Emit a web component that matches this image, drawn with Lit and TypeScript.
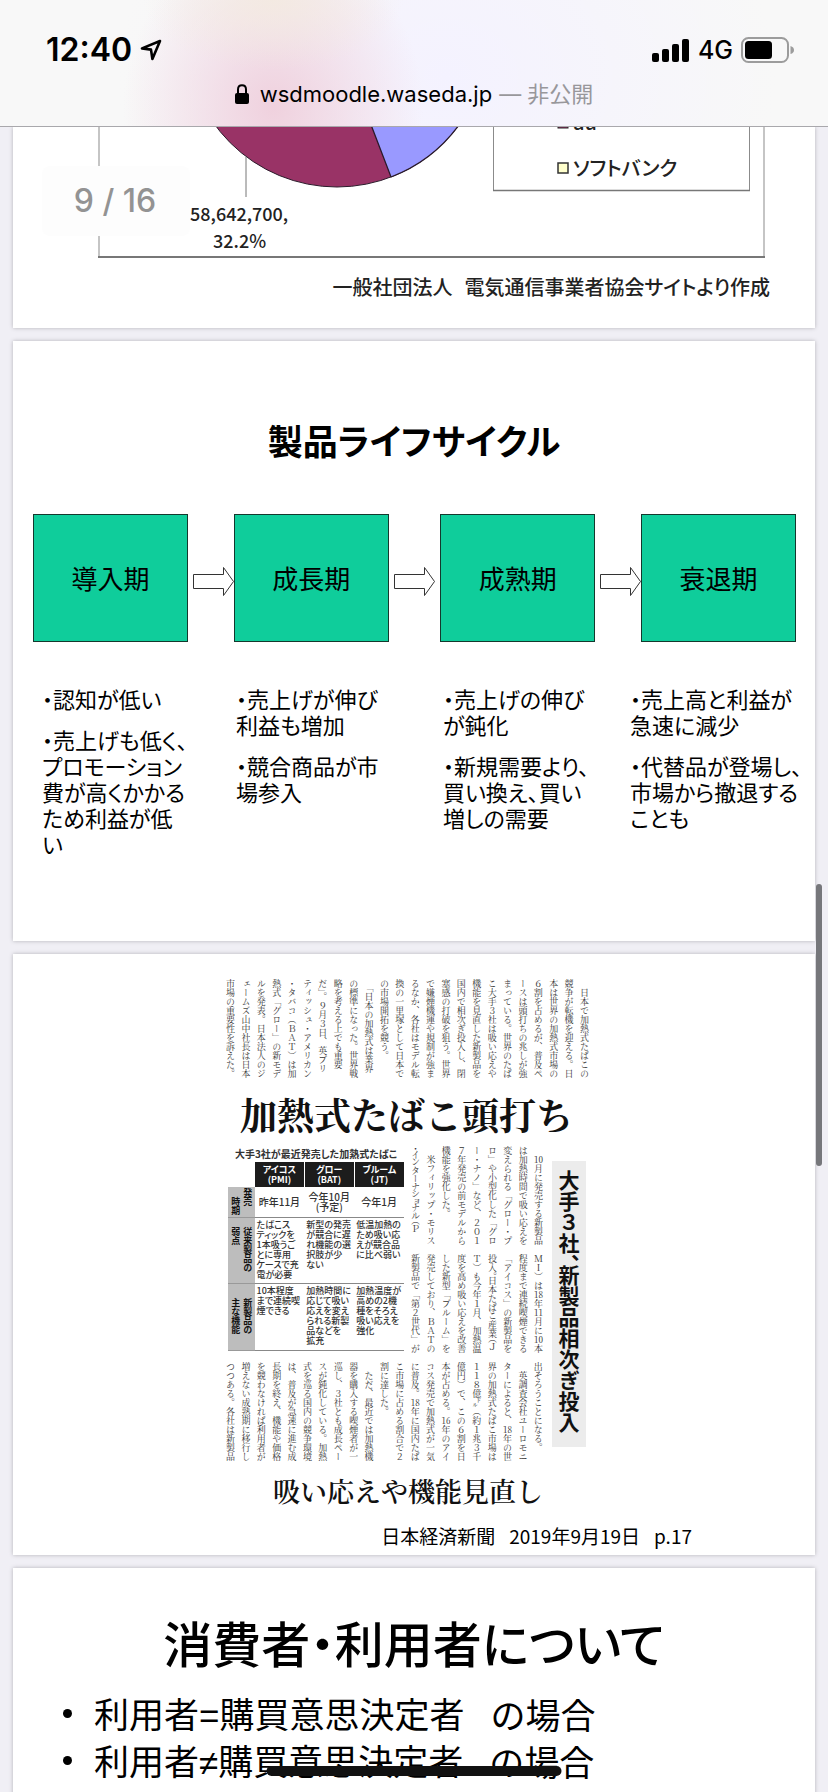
import { LitElement, html, css } from "lit";
import { customElement, property } from "lit/decorators.js";

const sans = css`"Noto Sans CJK JP", "Noto Sans", sans-serif`;
const mincho = css`"Noto Serif CJK JP", "Noto Sans CJK JP", serif`;

interface Stage {
  name: string;
  notes: string[][];
}

const STAGES: Stage[] = [
  {
    name: "導入期",
    notes: [["・認知が低い"], ["・売上げも低く、", "プロモーション", "費が高くかかる", "ため利益が低", "い"]],
  },
  {
    name: "成長期",
    notes: [["・売上げが伸び", "利益も増加"], ["・競合商品が市", "場参入"]],
  },
  {
    name: "成熟期",
    notes: [["・売上げの伸び", "が鈍化"], ["・新規需要より、", "買い換え、買い", "増しの需要"]],
  },
  {
    name: "衰退期",
    notes: [["・売上高と利益が", "急速に減少"], ["・代替品が登場し、", "市場から撤退する", "ことも"]],
  },
];

const TIER_TOP = [
  "　日本で加熱式たばこの", "競争が転機を迎える。日", "本は世界の加熱式市場の", "６割を占めるが、普及ペ",
  "ースは頭打ちの兆しが強", "まっている。世界のたば", "こ大手３社は吸い応えや", "機能を見直した新製品を",
  "国内で相次ぎ投入し、閉", "塞感の打破を狙う。世界", "で嫌煙機運や規制が強ま", "るなか、各社はモデル転",
  "換の一里塚として日本で", "の市場開拓を競う。", "　「日本の加熱式は業界", "の標準になった。世界戦",
  "略を考える上でも重要", "だ」。９月３日、英ブリ", "ティッシュ・アメリカン", "・タバコ（ＢＡＴ）は加",
  "熱式「グロー」の新モデ", "ルを発表。日本法人のジ", "ェームズ山中社長は日本", "市場の重要性を訴えた。",
];

const TIER_UPPER = [
  "　10月に発売する新製品", "は加熱時間で吸い応えを", "変えられる「グロー・プ", "ロ」や小型化した「グロ",
  "ー・ナノ」など、２０１", "７年発売の前モデルから", "機能を強化した。", "　米フィリップ・モリス",
  "・インターナショナル（Ｐ",
];

const TIER_LOWER = [
  "ＭＩ）は18年11月に10本", "程度まで連続喫煙できる", "「アイコス」の新製品を", "投入。日本たばこ産業（Ｊ",
  "Ｔ）も今年１月、加熱温", "度を高め吸い応えを改善", "した新型「ブルーム」を", "発売しており、ＢＡＴの",
  "新製品で「第２世代」が",
];

const TIER_BOTTOM = [
  "出そろうことになる。", "　英調査会社ユーロモニ", "ターによると、18年の世", "界の加熱式たばこ市場は",
  "１１８億㌦（約１兆３千", "億円）で、この６割を日", "本が占める。16年のアイ", "コス発売で加熱式が一気",
  "に普及。18年に国内たば", "こ市場に占める割合で２", "割に達した。", "　ただ、最近では加熱機",
  "器を購入する喫煙者が一", "巡し、３社とも成長ペー", "スが鈍化している。加熱", "式を巡る国内の競争環境",
  "は、普及が急速に進む成", "長期を終え、機能や価格", "を競わなければ利用者が", "増えない成熟期に移行し",
  "つつある。各社は新製品",
];

@customElement("browser-bar")
export class BrowserBar extends LitElement {
  static styles = css`
    :host {
      display: block;
      color: #000;
      font-family: Inter, ${sans};
      border-bottom: 1px solid #a9a8ac;
      background:
        radial-gradient(ellipse 130px 70px at 33% 0, rgba(243, 234, 222, 0.8), transparent),
        radial-gradient(ellipse 150px 170px at 33% 85%, rgba(239, 207, 220, 0.95), transparent),
        radial-gradient(ellipse 330px 260px at 54% 60%, rgba(244, 242, 255, 1), transparent),
        #f8f8f8;
    }
    .status {
      display: flex;
      justify-content: space-between;
      align-items: center;
      height: 40px;
      padding: 30px 34px 4px 46px;
    }
    .group {
      display: flex;
      align-items: center;
      gap: 8px;
    }
    .time {
      font-size: 32px;
      font-weight: 600;
      line-height: 40px;
    }
    .network {
      font-size: 25px;
      font-weight: 500;
      line-height: 40px;
    }
    .address {
      display: flex;
      justify-content: center;
      align-items: center;
      gap: 11px;
      height: 40px;
      padding-bottom: 12px;
      font-size: 22px;
      line-height: 40px;
    }
    .address a {
      color: inherit;
      text-decoration: none;
    }
    .mode {
      color: #98979b;
    }
    .url {
      display: flex;
      gap: 7px;
    }
    svg {
      display: block;
    }
  `;

  render() {
    return html`
      <div class="status">
        <div class="group">
          <span class="time">12:40</span>
          <svg width="22" height="22" viewBox="0 0 22 22" fill="none" stroke="#000" stroke-width="2.6" stroke-linejoin="round">
            <path d="M20 2 L2 9.4 L11 10.6 L12.4 20 Z" />
          </svg>
        </div>
        <div class="group">
          <svg width="38" height="24" viewBox="0 0 38 24">
            <rect x="0" y="15" width="7" height="9" rx="2" />
            <rect x="10" y="11" width="7" height="13" rx="2" />
            <rect x="20" y="6" width="7" height="18" rx="2" />
            <rect x="30" y="1" width="7" height="23" rx="2" />
          </svg>
          <span class="network">4G</span>
          <svg width="53" height="26" viewBox="0 0 53 26">
            <rect x="1" y="1" width="46" height="24" rx="6.5" fill="none" stroke="#9c9c9c" stroke-width="2" />
            <rect x="4" y="4" width="27" height="18" rx="3.5" />
            <path d="M49.5 9 Q53 10 53 13 Q53 16 49.5 17 Z" fill="#9c9c9c" />
          </svg>
        </div>
      </div>
      <div class="address">
        <svg width="14" height="20" viewBox="0 0 14 20">
          <rect x="0" y="9" width="14" height="11" rx="2" />
          <path d="M3 10 V5.5 Q3 1.2 7 1.2 Q11 1.2 11 5.5 V10" fill="none" stroke="#000" stroke-width="2" />
        </svg>
        <span class="url">
          <a href="#">wsdmoodle.waseda.jp</a>
          <span class="mode">— 非公開</span>
        </span>
      </div>
    `;
  }
}

@customElement("share-slide")
export class ShareSlide extends LitElement {
  static styles = css`
    :host {
      display: block;
      font-family: ${sans};
      color: #222;
    }
    svg {
      display: block;
      width: 100%;
    }
    text {
      fill: #222;
      font-weight: 500;
      font-feature-settings: "palt";
    }
    .label {
      font-size: 18px;
    }
    .legend {
      font-size: 20px;
    }
    .credit {
      display: flex;
      justify-content: flex-end;
      gap: 12px;
      margin: 0;
      padding: 14px 45px 27px;
      font-size: 20px;
      font-weight: 500;
      line-height: 28px;
      font-feature-settings: "palt";
    }
  `;

  render() {
    return html`
      <svg viewBox="13 127 802 132">
        <path d="M99 120 V257.5 M764 120 V257.5" stroke="#8b8b8b" />
        <path d="M98 257 H765" stroke="#777" stroke-width="2" />
        <circle cx="337" cy="36" r="151" fill="#993366" stroke="#2a1a2a" />
        <path d="M337 36 L391 177 A151 151 0 0 0 488 36 Z" fill="#9999ff" stroke="#2a1a2a" stroke-width="1.3" />
        <path d="M246 157 V197" stroke="#777" />
        <text class="label" x="190" y="221">58,642,700,</text>
        <text class="label" x="213" y="248">32.2%</text>
        <path d="M493.5 120 V190 M749.5 120 V190" stroke="#8b8b8b" />
        <path d="M493 190.5 H750" stroke="#777" stroke-width="1.5" />
        <rect x="558" y="118" width="10" height="10" fill="#993366" stroke="#222" />
        <text class="legend" x="573" y="130">au</text>
        <rect x="558" y="163" width="10" height="10" fill="#ffffcc" stroke="#333" stroke-width="1.5" />
        <text class="legend" x="573" y="176">ソフトバンク</text>
      </svg>
      <p class="credit"><span>一般社団法人</span><span>電気通信事業者協会サイトより作成</span></p>
    `;
  }
}

@customElement("lifecycle-slide")
export class LifecycleSlide extends LitElement {
  static styles = css`
    :host {
      display: block;
      padding: 75px 0 70px;
      font-family: ${sans};
      color: #000;
    }
    h2 {
      margin: 0;
      text-align: center;
      font-size: 35px;
      font-weight: 700;
      line-height: 48px;
      font-feature-settings: "palt";
    }
    .flow {
      display: grid;
      grid-template-columns: 155fr 45fr 155fr 52fr 155fr 45fr 155fr;
      align-items: center;
      padding: 50px 19px 0 20px;
    }
    .stage {
      display: grid;
      place-items: center;
      box-sizing: border-box;
      height: 128px;
      border: 1px solid #14382d;
      background: #0fcd9b;
      font-size: 26px;
      line-height: 36px;
    }
    .arrow {
      display: block;
      width: 41px;
      height: 44px;
      margin-left: 5px;
      margin-top: 6px;
    }
    .notes {
      display: grid;
      grid-template-columns: 194fr 207fr 187fr 185fr;
      padding: 43px 0 0 29px;
      font-size: 22px;
      line-height: 26px;
      white-space: nowrap;
      font-feature-settings: "palt";
    }
    .notes p {
      margin: 0 0 15px;
    }
    .notes span {
      display: block;
    }
  `;

  render() {
    return html`
      <h2>製品ライフサイクル</h2>
      <div class="flow">
        ${STAGES.map(
          (stage, i) => html`
            ${i > 0
              ? html`<svg class="arrow" viewBox="0 0 41 44" fill="#fff" stroke="#333">
                  <path d="M0.5 15.5 H30.5 V8.5 L40.5 22.5 L30.5 36.5 V29.5 H0.5 Z" />
                </svg>`
              : null}
            <div class="stage">${stage.name}</div>
          `
        )}
      </div>
      <div class="notes">
        ${STAGES.map(
          (stage) => html`<div>
            ${stage.notes.map((note) => html`<p>${note.map((line) => html`<span>${line}</span>`)}</p>`)}
          </div>`
        )}
      </div>
    `;
  }
}

@customElement("news-tier")
export class NewsTier extends LitElement {
  @property({ attribute: false }) lines: string[] = [];

  static styles = css`
    :host {
      display: flex;
      flex-direction: row-reverse;
      justify-content: space-between;
      height: 102px;
      font-family: ${mincho};
      font-size: 9px;
      line-height: 15px;
      color: #333;
    }
    .line {
      width: 15px;
      writing-mode: vertical-rl;
      white-space: nowrap;
    }
    .long {
      font-feature-settings: "vpal";
    }
    .digits {
      text-combine-upright: all;
    }
  `;

  render() {
    return this.lines.map(
      (line) => html`<div class="line ${line.length > 11 && !/\d/.test(line) ? "long" : ""}">${line
        .split(/(\d+)/)
        .map((part) => (/^\d+$/.test(part) ? html`<span class="digits">${part}</span>` : part))}</div>`
    );
  }
}

@customElement("news-slide")
export class NewsSlide extends LitElement {
  static styles = css`
    :host {
      display: block;
      padding: 25px 0 7px;
      font-family: ${sans};
      color: #111;
    }
    .clipping {
      width: 382px;
      margin: 0 auto;
    }
    .top {
      width: 369px;
    }
    h2 {
      margin: 9px 0 8px 17px;
      font-family: ${mincho};
      font-size: 37px;
      font-weight: 700;
      line-height: 48px;
      white-space: nowrap;
    }
    .body {
      display: flex;
      align-items: flex-start;
      gap: 6px;
    }
    .main {
      width: 323px;
    }
    .middle {
      display: flex;
      justify-content: space-between;
      align-items: flex-start;
    }
    .tiers {
      display: flex;
      flex-direction: column;
      gap: 6px;
      width: 138px;
      padding-bottom: 6px;
    }
    .side {
      box-sizing: border-box;
      width: 34px;
      height: 286px;
      margin-top: 15px;
      padding-top: 9px;
      background: #ececec;
      writing-mode: vertical-rl;
      font-size: 21px;
      font-weight: 700;
      line-height: 34px;
      white-space: nowrap;
      font-feature-settings: "vhal";
    }
    table {
      width: 176px;
      margin-left: 5px;
      border-collapse: collapse;
      table-layout: fixed;
      color: #333;
    }
    caption {
      font-size: 10px;
      font-weight: 700;
      line-height: 16px;
      white-space: nowrap;
      font-feature-settings: "palt";
    }
    th,
    td {
      padding: 0;
      font-size: 9px;
      line-height: 10px;
      white-space: nowrap;
      font-feature-settings: "palt";
    }
    .maker {
      height: 25px;
      background: #1c1c1c;
      border-left: 1px solid #fff;
      color: #fff;
      font-weight: 700;
    }
    .axis {
      background: #bdbdbd;
      border-bottom: 1px solid #999;
      text-align: center;
    }
    .axis div {
      display: inline-block;
      writing-mode: vertical-rl;
      font-weight: 700;
      line-height: 12px;
      text-align: left;
      color: #111;
      font-feature-settings: normal;
    }
    td {
      border-bottom: 1px solid #888;
      padding: 2px 0 0 2px;
      vertical-align: top;
      font-weight: 500;
    }
    .corner {
      width: 24px;
      border: 0;
    }
    .date {
      height: 30px;
      padding: 0;
      text-align: center;
      vertical-align: middle;
      font-size: 10px;
    }
    .weak {
      height: 63px;
    }
    .feature {
      height: 64px;
    }
    h3 {
      margin: 9px 0 0 50px;
      font-family: ${mincho};
      font-size: 27px;
      font-weight: 600;
      line-height: 36px;
      white-space: nowrap;
    }
    .source {
      display: flex;
      justify-content: flex-end;
      gap: 14px;
      margin: 0;
      padding: 15px 123px 0 0;
      font-size: 19px;
      line-height: 24px;
      color: #000;
    }
  `;

  render() {
    return html`
      <div class="clipping">
        <news-tier class="top" .lines=${TIER_TOP}></news-tier>
        <h2>加熱式たばこ頭打ち</h2>
        <div class="body">
          <div class="main">
            <div class="middle">
              <table>
                <caption>大手3社が最近発売した加熱式たばこ</caption>
                <tr>
                  <td class="corner"></td>
                  <th class="maker" scope="col">アイコス<br />(PMI)</th>
                  <th class="maker" scope="col">グロー<br />(BAT)</th>
                  <th class="maker" scope="col">ブルーム<br />(JT)</th>
                </tr>
                <tr>
                  <th class="axis" scope="row"><div>発売<br />　時期</div></th>
                  <td class="date">昨年11月</td>
                  <td class="date">今年10月<br />(予定)</td>
                  <td class="date">今年1月</td>
                </tr>
                <tr>
                  <th class="axis" scope="row"><div>従来製品の<br />弱点</div></th>
                  <td class="weak">たばこス<br />ティックを<br />1本吸うご<br />とに専用<br />ケースで充<br />電が必要</td>
                  <td class="weak">新型の発売<br />が競合に遅<br />れ機能の選<br />択肢が少<br />ない</td>
                  <td class="weak">低温加熱の<br />ため吸い応<br />えが競合品<br />に比べ弱い</td>
                </tr>
                <tr>
                  <th class="axis" scope="row"><div>新製品の<br />主な機能</div></th>
                  <td class="feature">10本程度<br />まで連続喫<br />煙できる</td>
                  <td class="feature">加熱時間に<br />応じて吸い<br />応えを変え<br />られる新製<br />品などを<br />拡充</td>
                  <td class="feature">加熱温度が<br />高めの2機<br />種をそろえ<br />吸い応えを<br />強化</td>
                </tr>
              </table>
              <div class="tiers">
                <news-tier .lines=${TIER_UPPER}></news-tier>
                <news-tier .lines=${TIER_LOWER}></news-tier>
              </div>
            </div>
            <news-tier .lines=${TIER_BOTTOM}></news-tier>
          </div>
          <div class="side">大手３社、新製品相次ぎ投入</div>
        </div>
        <h3>吸い応えや機能見直し</h3>
      </div>
      <p class="source"><span>日本経済新聞</span><span>2019年9月19日</span><span>p.17</span></p>
    `;
  }
}

@customElement("consumer-slide")
export class ConsumerSlide extends LitElement {
  static styles = css`
    :host {
      display: block;
      padding: 42px 0 0;
      font-family: ${sans};
      color: #000;
    }
    h2 {
      margin: 0;
      text-align: center;
      font-size: 49px;
      font-weight: 500;
      line-height: 64px;
      font-feature-settings: "palt";
    }
    ul {
      margin: 0;
      padding: 16px 0 0 50px;
      list-style: none;
      font-size: 35px;
      line-height: 47px;
      white-space: nowrap;
    }
    li {
      display: flex;
      align-items: center;
      height: 47px;
    }
    li::before {
      content: "";
      width: 9px;
      height: 9px;
      margin-right: 22px;
      border-radius: 50%;
      background: #000;
    }
    .sign {
      font-family: "Liberation Sans", sans-serif;
    }
    .case {
      margin-left: 26px;
    }
  `;

  render() {
    return html`
      <h2>消費者・利用者について</h2>
      <ul>
        ${["=", "≠"].map(
          (sign) => html`<li>
            <span>利用者<span class="sign">${sign}</span>購買意思決定者</span><span class="case">の場合</span>
          </li>`
        )}
      </ul>
    `;
  }
}

@customElement("app-root")
export class AppRoot extends LitElement {
  static styles = css`
    :host {
      display: block;
      position: relative;
      height: 100vh;
      overflow: hidden;
      background: #f0eff5;
    }
    main {
      display: flex;
      flex-direction: column;
      gap: 13px;
      padding: 0 13px;
    }
    .sheet {
      background: #fff;
      box-shadow: 0 0 4px rgba(0, 0, 0, 0.25);
    }
    .tall {
      min-height: 602px;
      box-sizing: border-box;
    }
    browser-bar {
      position: relative;
      z-index: 1;
    }
    .counter {
      position: absolute;
      left: 42px;
      top: 166px;
      width: 148px;
      height: 70px;
      box-sizing: border-box;
      padding-right: 2px;
      border-radius: 8px;
      background: #fdfdfd;
      color: #939393;
      font: 500 32px/70px Inter, sans-serif;
      text-align: center;
    }
    .thumb {
      position: absolute;
      right: 6px;
      top: 884px;
      width: 6px;
      height: 282px;
      border-radius: 3px;
      background: #76777b;
    }
    .home {
      position: absolute;
      left: 50%;
      bottom: 16px;
      width: 295px;
      height: 10px;
      transform: translateX(-50%);
      border-radius: 5px;
      background: #111;
    }
  `;

  render() {
    return html`
      <browser-bar></browser-bar>
      <main>
        <share-slide class="sheet"></share-slide>
        <lifecycle-slide class="sheet"></lifecycle-slide>
        <news-slide class="sheet"></news-slide>
        <consumer-slide class="sheet tall"></consumer-slide>
      </main>
      <div class="counter">9 / 16</div>
      <div class="thumb"></div>
      <div class="home"></div>
    `;
  }
}
